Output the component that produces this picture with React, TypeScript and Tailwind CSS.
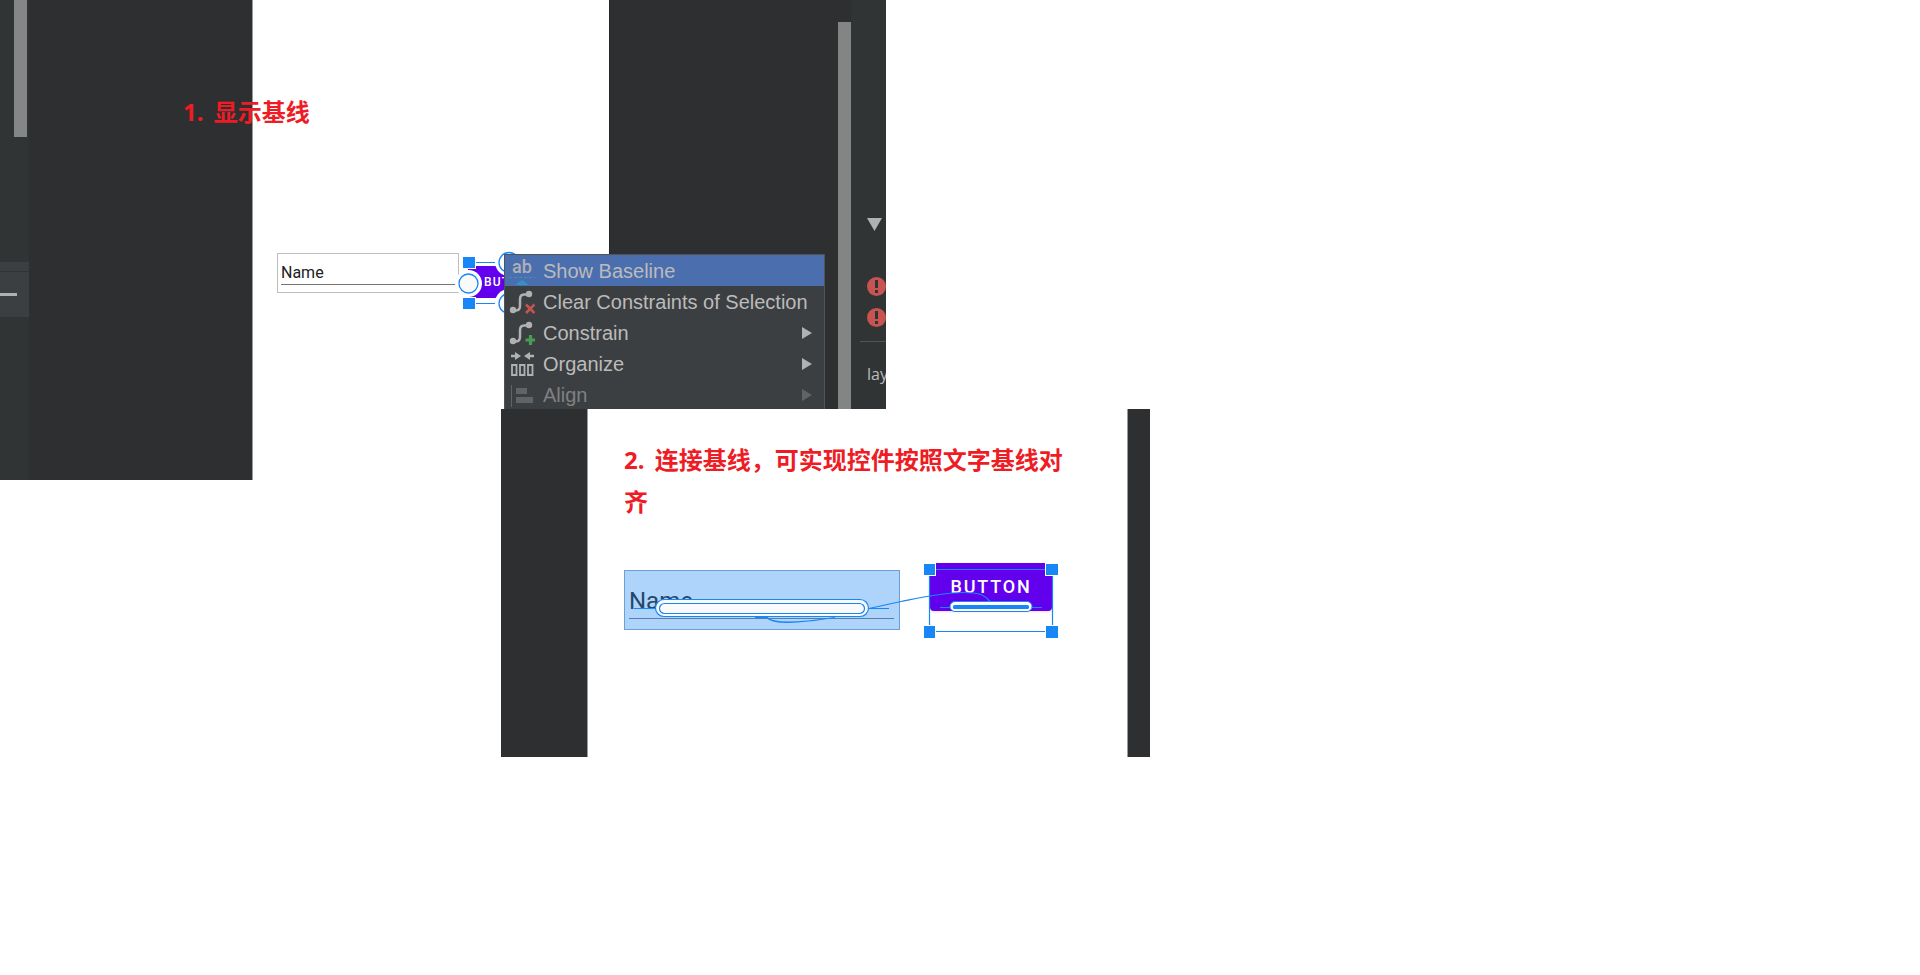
import type { ReactNode } from "react";

const BLUE = "#1886f7";

function Caption({ number, children }: { number: string; children: ReactNode }) {
  return (
    <h2 className="font-['Noto_Sans','Noto_Sans_CJK_SC',sans-serif] text-2xl leading-[42px] font-bold text-[#ee1c25]">
      <span className="mr-1">{number}.</span> {children}
    </h2>
  );
}

function BaselineIcon() {
  return (
    <svg width="26" height="28" viewBox="0 0 26 28" aria-hidden="true">
      <text x="13" y="16" textAnchor="middle" fontSize="18" fontWeight="500" fill="#afb1b3" fontFamily="Roboto, sans-serif">
        ab
      </text>
      <path d="M0 20.500h26" stroke="#3592c4" strokeDasharray="3 2" />
      <path d="M6 28l7-5 7 5z" fill="#3592c4" />
    </svg>
  );
}

function ConstraintIcon({ kind }: { kind: "clear" | "add" }) {
  return (
    <svg width="26" height="28" viewBox="0 0 26 28" aria-hidden="true">
      <circle cx="4" cy="22" r="3.200" fill="#afb1b3" />
      <circle cx="20" cy="6" r="3.200" fill="#afb1b3" />
      <path d="M4 22.500h3q4 0 4-5v-6q0-5 4-5h5" fill="none" stroke="#afb1b3" strokeWidth="2.500" />
      {kind === "clear" ? (
        <path d="M17 16.500l8.500 8.500m0-8.500l-8.500 8.500" stroke="#c75450" strokeWidth="2.600" />
      ) : (
        <path d="M21.500 16v10m-5-5h10" stroke="#499c54" strokeWidth="3.200" />
      )}
    </svg>
  );
}

function OrganizeIcon() {
  return (
    <svg width="26" height="28" viewBox="0 0 26 28" aria-hidden="true">
      <path d="M2 6h5M20 6h5" stroke="#afb1b3" strokeWidth="2.500" />
      <path d="M6 2l6 4-6 4zM21 2l-6 4 6 4z" fill="#afb1b3" />
      <path
        d="M3 15h4.500v10h-4.500zM11 15h4.500v10h-4.500zM19 15h4.500v10h-4.500z"
        fill="none"
        stroke="#afb1b3"
        strokeWidth="1.800"
      />
    </svg>
  );
}

function AlignIcon() {
  return (
    <svg width="26" height="28" viewBox="0 0 26 28" aria-hidden="true">
      <path d="M2.500 4v22" stroke="#616365" />
      <path d="M7 7h11v6H7zM7 16h17v6H7z" fill="#616365" />
    </svg>
  );
}

type Item = { label: string; icon: ReactNode; submenu?: boolean; active?: boolean; disabled?: boolean };

const items: Item[] = [
  { label: "Show Baseline", icon: <BaselineIcon />, active: true },
  { label: "Clear Constraints of Selection", icon: <ConstraintIcon kind="clear" /> },
  { label: "Constrain", icon: <ConstraintIcon kind="add" />, submenu: true },
  { label: "Organize", icon: <OrganizeIcon />, submenu: true },
  { label: "Align", icon: <AlignIcon />, submenu: true, disabled: true },
];

function ContextMenu() {
  return (
    <div role="menu" className="absolute top-[254px] left-[504px] w-[321px] border border-[#515355] bg-[#3c3f41]">
      {items.map((item) => (
        <button
          key={item.label}
          role="menuitem"
          disabled={item.disabled}
          className={
            "flex h-[31px] w-full items-center gap-2 pr-3 pl-1 text-left font-['Liberation_Sans',sans-serif] text-xl leading-6 " +
            (item.active ? "bg-[#4b6eaf] text-[#bbbbbb]" : item.disabled ? "text-[#808080]" : "text-[#bbbbbb]")
          }
        >
          {item.icon}
          <span className="flex-1 whitespace-nowrap">{item.label}</span>
          {item.submenu && (
            <svg width="10" height="12" viewBox="0 0 10 12" aria-hidden="true">
              <path d="M0 0l10 6-10 6z" fill={item.disabled ? "#616365" : "#afb1b3"} />
            </svg>
          )}
        </button>
      ))}
    </div>
  );
}

function ErrorIcon() {
  return (
    <svg className="shrink-0" width="19" height="19" viewBox="0 0 19 19" aria-hidden="true">
      <circle cx="9.500" cy="9.500" r="9.500" fill="#c75450" />
      <path d="M8 3h3v8H8zM8 13h3v3H8z" fill="#313435" />
    </svg>
  );
}

function FirstCanvas() {
  return (
    <div className="relative w-[357px] border-l border-[#9a9a9a] bg-white">
      <div className="absolute top-[253px] left-[24px] h-10 w-[182px] border border-[#bdbdbd] px-[3px] pt-[7px]">
        <input
          aria-label="Name field"
          defaultValue="Name"
          className="block h-6 w-[175px] border-b border-[#757575] bg-transparent font-['Roboto',sans-serif] text-base leading-5 text-[#212121] outline-none"
        />
      </div>
      <button className="absolute top-[266px] left-[215px] h-8 w-20 bg-[#6200ee] pl-4 text-left font-['Roboto',sans-serif] text-xs font-medium tracking-widest text-white">
        BUTTON
      </button>
      <svg className="absolute top-[245px] left-[199px]" width="80" height="80" viewBox="0 0 80 80" aria-hidden="true">
        <circle cx="16.500" cy="38.500" r="13.500" fill="#fff" />
        <path d="M10 11h14v13H10zM10 52h14v13H10z" fill="#fff" />
        <circle cx="57" cy="17" r="14" fill="#fff" />
        <circle cx="57" cy="58" r="14" fill="#fff" />
        <path d="M11 12h12v11H11zM11 53h12v11H11z" fill={BLUE} />
        <path d="M24 17.500h19M24 58.500h19" stroke={BLUE} />
        <g fill="#fafafa" stroke={BLUE} strokeWidth="1.300">
          <circle cx="16.500" cy="38.500" r="9.500" />
          <circle cx="57" cy="17.500" r="10" />
          <circle cx="57" cy="58.500" r="10" />
        </g>
      </svg>
    </div>
  );
}

function BaselineMenuFigure() {
  return (
    <section className="relative flex h-[480px] w-[886px] bg-white">
      <div className="flex w-[29px] flex-col bg-[#313435]">
        <div className="ml-[14px] h-[137px] w-[13px] bg-[#858688]" />
        <div className="mt-[125px] h-[55px] bg-[#3c3f41]">
          <div className="h-[10px] border-b border-[#313435]" />
          <div className="mt-[21px] h-[3px] w-[17px] bg-[#afb1b3]" />
        </div>
      </div>
      <div className="w-[223px] bg-[#2e2f31]" />
      <FirstCanvas />
      <div className="flex-1 border-l border-[#252628] bg-[#2e2f31]" />
      <div className="w-[13px] bg-[#2e2f31] pt-[22px]">
        <div className="h-full bg-[#828583]" />
      </div>
      <aside className="relative flex w-[35px] flex-col overflow-hidden bg-[#313435] pt-[218px]">
        <svg className="ml-4 shrink-0" width="15" height="13" viewBox="0 0 15 13" aria-hidden="true">
          <path d="M0 0h15l-7.500 13z" fill="#afb1b3" />
        </svg>
        <div className="mt-[46px] ml-4 flex flex-col gap-3">
          <ErrorIcon />
          <ErrorIcon />
        </div>
        <div className="mt-[14px] ml-[9px] border-t border-[#515355]" />
        <p className="mt-5 ml-4 font-['Open_Sans',sans-serif] text-base leading-6 text-[#bbbbbb]">lay</p>
      </aside>
      <div className="absolute top-[91px] left-[183px]">
        <Caption number="1">显示基线</Caption>
      </div>
      <ContextMenu />
    </section>
  );
}

function ConnectFigure() {
  return (
    <section className="relative -mt-[71px] ml-[501px] flex h-[348px] w-[649px] bg-white">
      <div className="w-[86px] bg-[#2e2f31]" />
      <div className="relative flex-1 border-x border-[#9a9a9a] pt-[30px] pl-9">
        <div className="w-[450px]">
          <Caption number="2">连接基线，可实现控件按照文字基线对齐</Caption>
        </div>
        <div className="absolute top-[161px] left-9 h-[60px] w-[276px] border border-[#6ba1d8] bg-[#aed4fb] px-1 pt-3">
          <input
            aria-label="Name field with baseline"
            defaultValue="Name"
            className="block h-9 w-[265px] border-b border-[#587fa8] bg-transparent font-['Roboto',sans-serif] text-2xl leading-8 text-[#24476b] outline-none"
          />
        </div>
        <button className="absolute top-[154px] left-[342px] h-12 w-[122px] rounded-b bg-[#6200ee] font-['Roboto',sans-serif] text-lg leading-6 font-medium tracking-widest text-white shadow">
          BUTTON
        </button>
        <svg className="absolute top-[141px] left-[32px]" width="450" height="100" viewBox="620 550 450 100" aria-hidden="true">
          <g fill="none" stroke={BLUE} strokeWidth="1.200">
            <path d="M634 608.500h21M869 608.500h20" />
            <path d="M755 617.500h12c6 7 29 6 68 0" />
            <path d="M869 608.500l32-7c20-4 42-9 62-9 18 0 22 3 27 9" />
            <path d="M936 569.500h109M936 631.500h109M929.500 576v49M1052.500 576v49M940 607.500h102" />
          </g>
          <rect x="655.500" y="599.500" width="213" height="17" rx="8.500" fill="#fafafa" stroke={BLUE} strokeWidth="1.200" />
          <rect x="659.500" y="603.500" width="205" height="10" rx="5" fill="#fafafa" stroke={BLUE} strokeWidth="1.200" />
          <rect x="950" y="601.500" width="82" height="10" rx="5" fill="#fff" stroke={BLUE} />
          <rect x="953" y="605" width="76" height="4" rx="1.500" fill={BLUE} />
          <path
            d="M923 563h13v13h-13zM1045 563h14v13h-14zM923 625h13v14h-13zM1045 625h14v14h-14z"
            fill="#fff"
          />
          <path
            d="M924 564h11v11h-11zM1046 564h12v11h-12zM924 626h11v12h-11zM1046 626h12v12h-12z"
            fill={BLUE}
          />
        </svg>
      </div>
      <div className="w-[22px] bg-[#2e2f31]" />
    </section>
  );
}

export default function App() {
  return (
    <main className="min-h-screen bg-white">
      <BaselineMenuFigure />
      <ConnectFigure />
    </main>
  );
}
